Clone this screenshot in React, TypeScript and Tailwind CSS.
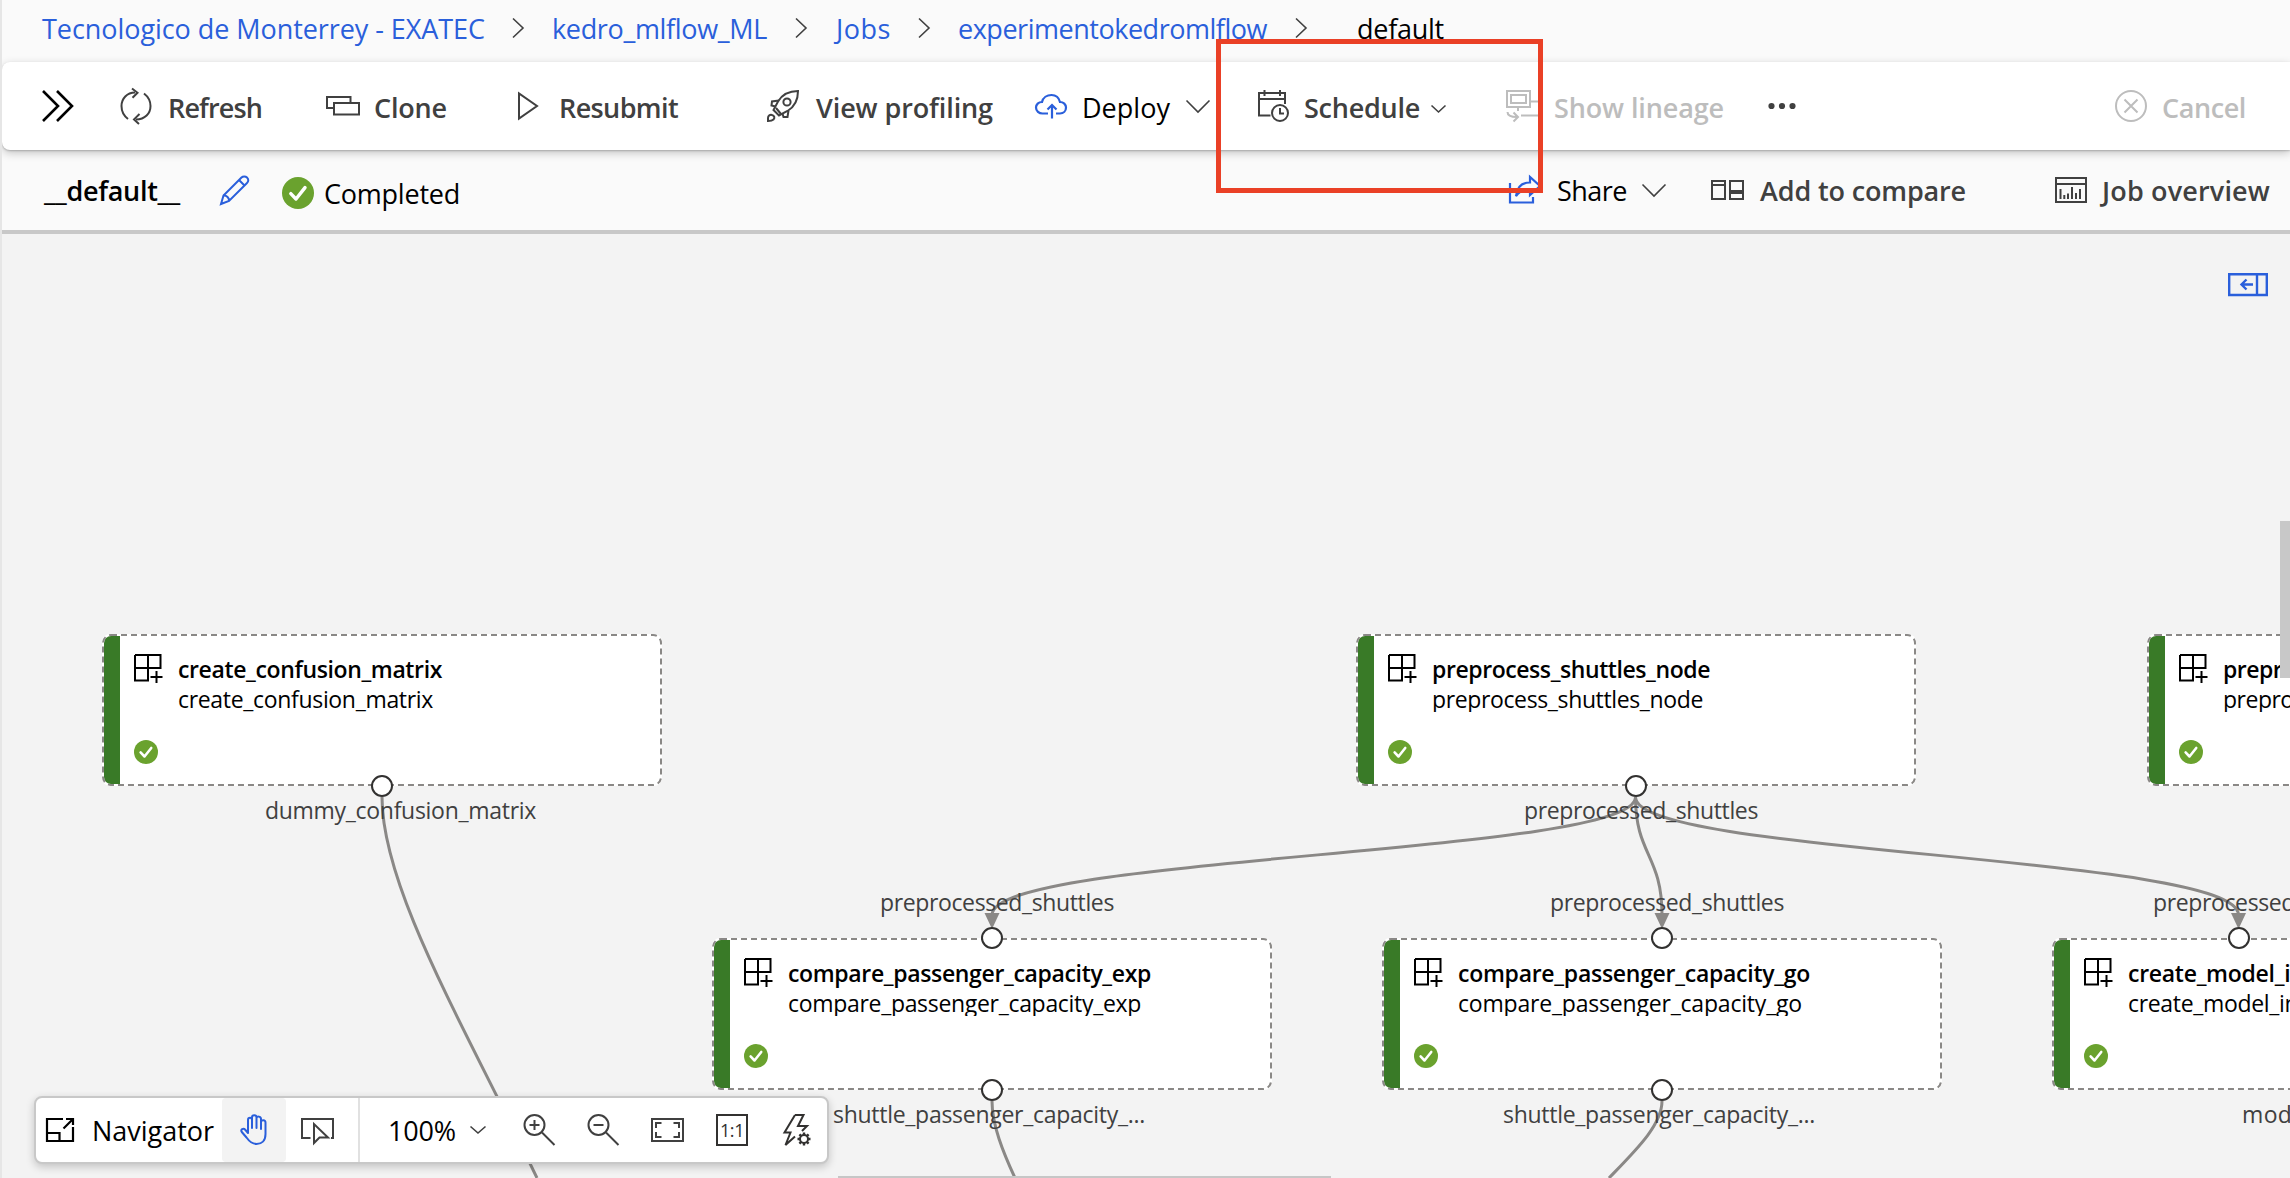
import React, { useLayoutEffect, useRef, useState } from 'react';

const BLUE = '#2a5fdb';
const DARK = '#404040';
const MUTED = '#bdbdbd';

/** Single-line label whose letter spacing is tuned so that it spans `w` pixels. */
function Fit({ w, children, className = '' }: { w: number; children: string; className?: string }) {
  const ref = useRef<HTMLSpanElement>(null);
  const [ls, setLs] = useState(0);
  useLayoutEffect(() => {
    if (!ref.current) return;
    ref.current.style.letterSpacing = '0px';
    const natural = ref.current.getBoundingClientRect().width;
    const next = (w - natural) / children.length;
    ref.current.style.letterSpacing = `${next}px`;
    setLs(next);
  }, [w, children]);
  return (
    <span className={`block shrink-0 whitespace-nowrap ${className}`} style={{ width: w }}>
      <span ref={ref} className="inline-block" style={{ letterSpacing: ls }}>
        {children}
      </span>
    </span>
  );
}

type IconProps = {
  w: number;
  h: number;
  color?: string;
  sw?: number;
  className?: string;
  children: React.ReactNode;
};

function Icon({ w, h, color = DARK, sw = 2, className = '', children }: IconProps) {
  return (
    <svg
      width={w}
      height={h}
      viewBox={`0 0 ${w} ${h}`}
      fill="none"
      stroke={color}
      strokeWidth={sw}
      className={`block shrink-0 overflow-visible ${className}`}
    >
      {children}
    </svg>
  );
}

function Crumb() {
  return (
    <Icon w={12} h={20} sw={1.6} className="mb-[1px]">
      <path d="M1 0.5L11 10L1 19.5" />
    </Icon>
  );
}

function Down({ w, h, className = '' }: { w: number; h: number; className?: string }) {
  return (
    <Icon w={w} h={h} sw={1.6} className={className}>
      <path d={`M0.5 0.5L${w / 2} ${h - 1}L${w - 0.5} 0.5`} />
    </Icon>
  );
}

function Check({ size, className = '' }: { size: number; className?: string }) {
  return (
    <svg width={size} height={size} viewBox="0 0 32 32" className={`block shrink-0 ${className}`}>
      <circle cx="16" cy="16" r="16" fill="#6aa22e" />
      <path
        d="M8.8 16.6L14 22L23 10.6"
        fill="none"
        stroke="#fff"
        strokeWidth="3.4"
        strokeLinecap="round"
        strokeLinejoin="round"
      />
    </svg>
  );
}

function Breadcrumbs() {
  return (
    <nav className="flex h-[62px] items-center bg-[#fafafa] pb-[5px] pl-[40px] text-[27px] leading-[36px] text-[#2a5fdb] [&>span]:mt-[1px]">
      <Fit w={443}>Tecnologico de Monterrey - EXATEC</Fit>
      <div className="ml-[27px]"><Crumb /></div>
      <Fit w={215} className="ml-[28px]">kedro_mlflow_ML</Fit>
      <div className="ml-[28px]"><Crumb /></div>
      <Fit w={55} className="ml-[29px]">Jobs</Fit>
      <div className="ml-[27px]"><Crumb /></div>
      <Fit w={309} className="ml-[28px]">experimentokedromlflow</Fit>
      <div className="ml-[28px]"><Crumb /></div>
      <Fit w={133} className="ml-[27px] text-black">__default__</Fit>
    </nav>
  );
}

function Toolbar() {
  return (
    <div className="relative flex h-[88px] items-center rounded-l-[8px] bg-white pl-[40px] text-[27px] leading-[36px] font-semibold text-[#404040] shadow-[0_3px_10px_rgba(0,0,0,0.22),0_1px_2px_rgba(0,0,0,0.2)] [&>span]:mt-[3px]">
      <Icon w={32} h={32} color="#000" sw={2.6}>
        <path d="M1 1L16 16L1 31M15 1L30 16L15 31" />
      </Icon>
      <Icon w={32} h={36} className="ml-[46px]">
        <path d="M8 31C3.500 27.500 1.500 23 1.500 18C1.500 10.500 7 4.500 15 4.500M24 5.500C28.500 9 30.500 13.500 30.500 18C30.500 25.500 25 31.500 16 31.500" />
        <path d="M12 0.500L17.500 4.800L12.500 9.800M19.500 26L14 31.400L19 36" />
      </Icon>
      <Fit w={94} className="ml-[16px]">Refresh</Fit>
      <Icon w={34} h={20} className="ml-[64px]">
        <path d="M7.500 12H1V1H24.500V6.500M8 7H33V18.500H8Z" />
      </Icon>
      <Fit w={73} className="ml-[14px]">Clone</Fit>
      <Icon w={20} h={28} className="ml-[71px]">
        <path d="M1 1.500V26.500L19 14Z" />
      </Icon>
      <Fit w={119} className="ml-[21px]">Resubmit</Fit>
      <Icon w={32} h={32} className="ml-[89px]">
        <path d="M31 1C22 1 15.500 4 11 11.500L6.500 20L12 25.500L20.500 21C28 16.500 31 10 31 1Z" />
        <circle cx="20" cy="12" r="3.600" />
        <path d="M12 10.500L5 11.500L4.500 15.500L8.500 16.500M21.500 20.500L20.500 27H16.500L15.500 23.500M9 18L14 24" />
        <path d="M1 31V28C1 25.500 3 24.500 5 25C7.500 25.500 8 28 6.500 29.500C5 31 3 31 1 31Z" />
      </Icon>
      <Fit w={177} className="ml-[17px]">View profiling</Fit>
      <Icon w={32} h={25} color={BLUE} sw={2.2} className="ml-[42px]">
        <path d="M13 19.500H7.500C4 19.500 1 17 1 13.500C1 10.500 3.500 8 7 8C8 3.500 12 1 16.500 1C21 1 24 4 25 8C28.500 8 31 10.500 31 13.500C31 17 28.500 19.500 25 19.500H21" />
        <path d="M17 24.500V11M12.500 15.500L17 11L21.500 15.500" />
      </Icon>
      <Fit w={88} className="ml-[15px] font-normal text-black">Deploy</Fit>
      <Down w={24} h={13} className="ml-[16px]" />
      <Icon w={32} h={32} className="ml-[48px]">
        <path d="M12.500 25.500H1V3H27V14M1 9H27M6.500 0V6M22 0V6" />
        <circle cx="22" cy="23" r="8" />
        <path d="M22 18V23.500H26" />
      </Icon>
      <Fit w={116} className="ml-[14px]">Schedule</Fit>
      <Down w={15} h={8} className="mt-[6px] ml-[11px]" />
      <Icon w={36} h={32} color={MUTED} className="ml-[60px]">
        <path d="M1 1H24V17H1ZM5 5H20V13H5ZM24 11.500H34V25.500H15M12 17V21M1.500 22C1.500 25.500 5 27 11 27M7.500 22.500L12 27L7.500 31.500" />
      </Icon>
      <Fit w={170} className="ml-[12px] text-[#bdbdbd]">Show lineage</Fit>
      <Icon w={28} h={6} className="ml-[44px]" sw={0}>
        <g fill={DARK}>
          <circle cx="3.500" cy="3" r="3.100" />
          <circle cx="14" cy="3" r="3.100" />
          <circle cx="24.500" cy="3" r="3.100" />
        </g>
      </Icon>
      <Icon w={32} h={32} color={MUTED} className="ml-[319px]">
        <circle cx="16" cy="16" r="15" />
        <path d="M9.500 9.500L22.500 22.500M22.500 9.500L9.500 22.500" />
      </Icon>
      <Fit w={84} className="ml-[15px] text-[#bdbdbd]">Cancel</Fit>
    </div>
  );
}

function JobHeader() {
  return (
    <div className="flex h-[84px] items-center border-b-4 border-[#c8c8c8] bg-[#fafafa] pl-[42px] text-[27px] leading-[36px] [&>span]:mt-[2px]">
      <Fit w={136} className="font-semibold text-black">__default__</Fit>
      <Icon w={30} h={30} color={BLUE} className="ml-[40px]">
        <path d="M1 29L3.500 20.500L21.500 2.500C23 1 25.500 1 27 2.500C28.700 4.200 28.700 6.500 27 8L9 26Z" />
        <path d="M19 5L24.500 10.500M3.500 20.500C6.500 20 9.500 23 9 26" />
      </Icon>
      <Check size={32} className="mt-[5px] ml-[32px]" />
      <div className="mt-[7px] ml-[10px] text-black">
        <Fit w={136}>Completed</Fit>
      </div>
      <Icon w={34} h={28} color={BLUE} sw={2.2} className="ml-[1048px]">
        <path d="M2 7V26.500H25V21" />
        <path d="M8 20C9 11 14 6.500 22 6.500V1L32 10L22 19V13C16 13 11.500 15 8 20Z" />
      </Icon>
      <Fit w={70} className="ml-[15px] text-black">Share</Fit>
      <Down w={24} h={13} className="ml-[15px]" />
      <Icon w={33} h={20} className="ml-[45px]">
        <path d="M1 1H14V19H1ZM1 5H14M19 1H32V19H19Z" />
        <path d="M19 12H32" strokeWidth={4} />
      </Icon>
      <Fit w={206} className="ml-[16px] font-semibold text-[#404040]">Add to compare</Fit>
      <Icon w={32} h={26} className="ml-[89px]">
        <path d="M1 1H31V25H1ZM1 7H31M5.500 12V22M9.300 18V22M13 16.500V22M17 10V22M21 16V22M25 12V22" />
      </Icon>
      <Fit w={168} className="ml-[15px] font-semibold text-[#404040]">Job overview</Fit>
    </div>
  );
}

type NodeData = { x: number; y: number; name: string; w1: number; w2: number };

const nodes: NodeData[] = [
  { x: 102, y: 634, name: 'create_confusion_matrix', w1: 264, w2: 255 },
  { x: 1356, y: 634, name: 'preprocess_shuttles_node', w1: 278, w2: 271 },
  { x: 2147, y: 634, name: 'preprocess_companies_node', w1: 307, w2: 299 },
  { x: 712, y: 938, name: 'compare_passenger_capacity_exp', w1: 363, w2: 353 },
  { x: 1382, y: 938, name: 'compare_passenger_capacity_go', w1: 352, w2: 344 },
  { x: 2052, y: 938, name: 'create_model_input_table_node', w1: 343, w2: 331 },
];

const ports: [number, number][] = [
  [382, 786], [1635.5, 786], [992, 938], [992, 1090], [1662, 938], [1662, 1090], [2238.5, 938],
];

const labels: { x: number; y: number; w: number; text: string }[] = [
  { x: 265, y: 819, w: 271, text: 'dummy_confusion_matrix' },
  { x: 1524, y: 819, w: 234, text: 'preprocessed_shuttles' },
  { x: 880, y: 911, w: 234, text: 'preprocessed_shuttles' },
  { x: 1550, y: 911, w: 234, text: 'preprocessed_shuttles' },
  { x: 2153, y: 911, w: 234, text: 'preprocessed_shuttles' },
  { x: 833, y: 1123, w: 312, text: 'shuttle_passenger_capacity_...' },
  { x: 1503, y: 1123, w: 312, text: 'shuttle_passenger_capacity_...' },
  { x: 2242, y: 1123, w: 204, text: 'model_input_table' },
];

const edges = [
  'M382 797C382 890 468 1032 537 1178',
  'M1635.5 797C1635.5 855 992 855 992 915',
  'M1635.5 797C1635.5 855 1662 855 1662 915',
  'M1635.5 797C1635.5 855 2238.5 855 2238.5 915',
  'M992 1101C992 1125 1003 1152 1015 1178',
  'M1662 1101C1662 1125 1636 1150 1609 1178',
];

function GraphNode({ node }: { node: NodeData }) {
  return (
    <div
      className="absolute flex h-[152px] w-[560px] rounded-[8px] bg-white"
      style={{ left: node.x, top: node.y }}
    >
      <svg width="560" height="152" className="pointer-events-none absolute inset-0">
        <rect x="1" y="1" width="558" height="150" rx="8" fill="none" stroke="#8a8886" strokeWidth="2" strokeDasharray="6 4" />
      </svg>
      <div className="my-[2px] ml-[2px] w-[16px] rounded-l-[7px] bg-[#397a27]" />
      <div className="flex flex-col pt-[20px] pl-[14px]">
        <Icon w={30} h={30} color="#000">
          <path d="M1 1H26.500V14H1M14 1V26.500H1V1M1 14H14M22.500 17V29M16.500 23H28.500" />
        </Icon>
        <Check size={24} className="mt-[56px]" />
      </div>
      <div className="pt-[20px] pl-[14px] text-[23px] leading-[30px] text-black">
        <Fit w={node.w1} className="font-semibold">{node.name}</Fit>
        <Fit w={node.w2} className="h-[28px] overflow-y-clip">{node.name}</Fit>
      </div>
    </div>
  );
}

function Canvas() {
  return (
    <div className="pointer-events-none absolute inset-0 overflow-hidden">
      <svg width="2290" height="1178" className="absolute inset-0" fill="none" stroke="#8a8886" strokeWidth="3">
        {edges.map((d) => (
          <path key={d} d={d} />
        ))}
        {[992, 1662, 2238.5].map((x) => (
          <path key={x} d={`M${x - 7.5} 913H${x + 7.5}L${x} 929Z`} fill="#8a8886" stroke="none" />
        ))}
      </svg>
      {nodes.map((n) => (
        <GraphNode key={n.x} node={n} />
      ))}
      {ports.map(([x, y]) => (
        <div
          key={`${x}-${y}`}
          className="absolute h-[22px] w-[22px] rounded-full border-2 border-[#323130] bg-white"
          style={{ left: x - 11, top: y - 11 }}
        />
      ))}
      {labels.map((l) => (
        <div
          key={`${l.x}-${l.y}`}
          className="absolute text-[23px] leading-[30px] text-[#404040]"
          style={{ left: l.x, top: l.y - 24 }}
        >
          <Fit w={l.w}>{l.text}</Fit>
        </div>
      ))}
      <Icon w={40} h={24} color={BLUE} sw={2.4} className="absolute top-[273px] left-[2228px]">
        <path d="M1.200 1.200H38.800V22H1.200ZM29 1V22M25 11.500H13.500M18.500 6.500L13.500 11.500L18.500 16.500" />
      </Icon>
      <div className="absolute top-[521px] right-0 h-[157px] w-[10px] bg-[#c8c8c8]" />
      <div className="absolute bottom-0 left-[838px] h-[2px] w-[493px] bg-[#c6c6c6]" />
    </div>
  );
}

function Controls() {
  return (
    <div className="absolute top-[1096px] left-[34px] flex h-[68px] w-[795px] items-center rounded-[8px] border-2 border-[#c8c8c8] bg-white text-[27px] leading-[36px] text-black shadow-[0_3px_8px_rgba(0,0,0,0.2)] [&>span]:mt-[2px]">
      <Icon w={28} h={24} color="#000" sw={2.2} className="ml-[10px]">
        <path d="M17 1H1V23H27V9M1 15H13.500V23M17.500 10.500L27 1M20 1H27V7" />
      </Icon>
      <Fit w={122} className="ml-[18px]">Navigator</Fit>
      <div className="ml-[8px] flex h-[64px] w-[64px] items-center justify-center rounded-[4px] bg-[#f3f3f3]">
        <Icon w={27} h={31} color={BLUE} className="mr-[2px] mb-[2px]">
          <path
            strokeLinejoin="round"
            strokeLinecap="round"
            d="M8 19V6C8 3 12 3 12 6V14M12 14V3.500C12 0.500 16.500 0.500 16.500 3.500V14M16.500 14V4C16.500 2 21 2 21 5V15M21 15V8C21 5.500 25.500 5.500 25.500 8.500V20C25.500 27 21.500 30 16.500 30C12 30 9 27 6.500 23.500L1.800 18C0 15.500 3.500 13.800 5 15.500L8 19"
          />
        </Icon>
      </div>
      <Icon w={33} h={26} className="mt-[1px] ml-[15px]">
        <path d="M9.500 20H1V1H32V20H30M13 6V25L18.500 19.500H27Z" />
      </Icon>
      <div className="ml-[24px] h-[64px] w-[2px] bg-[#e1e1e1]" />
      <Fit w={68} className="ml-[28px]">100%</Fit>
      <Down w={16} h={8} className="ml-[14px]" />
      <Icon w={32} h={32} className="ml-[37px]">
        <circle cx="11.500" cy="11" r="10" />
        <path d="M19 18.500L31.500 31M11.500 6V16M6.500 11H16.500" />
      </Icon>
      <Icon w={32} h={32} className="ml-[32px]">
        <circle cx="11.500" cy="11" r="10" />
        <path d="M19 18.500L31.500 31M6.500 11H16.500" />
      </Icon>
      <Icon w={33} h={24} className="ml-[32px]">
        <path d="M1 1H32V23H1ZM5 10V5H10.500M22.500 5H28V10M28 14V19H22.500M10.500 19H5V14" />
      </Icon>
      <div className="ml-[32px] flex h-[32px] w-[32px] items-center justify-center border-2 border-[#323130] text-[18px] leading-[20px]">
        <Fit w={24} className="text-[#323130]">1:1</Fit>
      </div>
      <Icon w={29} h={32} color="#323130" className="ml-[35px]">
        <path d="M12 1H20.500L15 12H24L19 17M12 1L1.500 18.500H7.500L2.500 31L12 22.500" />
        <circle cx="21" cy="25" r="4" />
        <path strokeWidth={2.4} d="M21 18.500V21M21 29V31.500M14.500 25H17M25 25H27.500M16.400 20.400L18.200 22.200M23.800 27.800L25.600 29.600M25.600 20.400L23.800 22.200M18.200 27.800L16.400 29.600" />
      </Icon>
    </div>
  );
}

export default function App() {
  return (
    <div className="relative flex h-[1178px] w-[2290px] flex-col overflow-hidden border-l-2 border-[#e6e6e6] bg-[#f3f3f3] font-['Open_Sans','Noto_Sans',sans-serif]">
      <div className="z-10 flex flex-col bg-[#fafafa]">
        <Breadcrumbs />
        <Toolbar />
        <JobHeader />
      </div>
      <div className="absolute inset-y-0 -left-[2px] w-[2290px]">
        <Canvas />
        <Controls />
      </div>
      <div className="absolute top-[39px] left-[1214px] z-20 h-[154px] w-[327px] border-[5px] border-[#ea4026]" />
    </div>
  );
}
